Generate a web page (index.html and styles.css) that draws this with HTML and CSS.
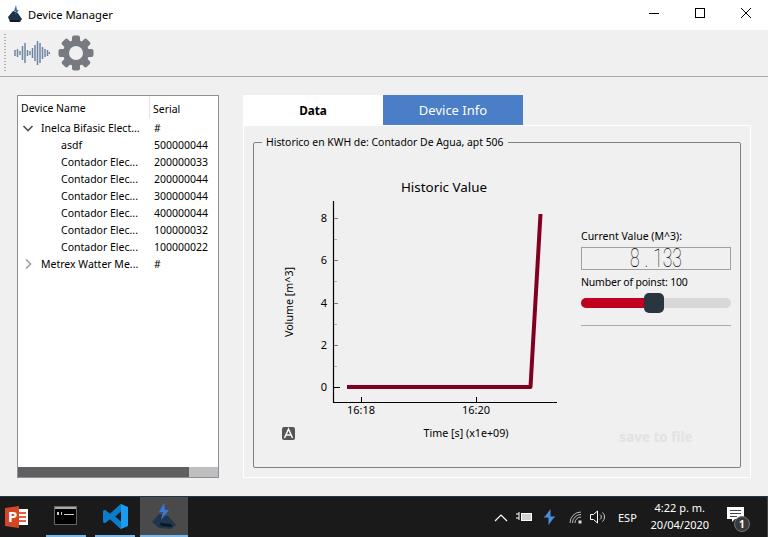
FILE: index.html
```html
<!DOCTYPE html>
<html lang="en">
<head>
<meta charset="utf-8">
<title>Device Manager</title>
<link rel="stylesheet" href="styles.css">
</head>
<body>
<div class="window">
  <header class="titlebar">
    <svg class="app-icon" width="16" height="18" viewBox="0 0 16 18"><path d="M1 12 L6 6 L10 7 L15 14 L13 17 L3 17 Z" fill="#1f3346"/><path d="M4 15 L12 15 L13 17 L3 17 Z" fill="#0f1a24"/><path d="M9 0 L7 6 L9 6 L8 10 L12 5 L10 5 Z" fill="#3f6fb0"/></svg>
    <span class="title-text">Device Manager</span>
    <div class="win-controls">
      <svg width="46" height="30" viewBox="0 0 46 30"><path d="M18 13.500H28" stroke="#000" fill="none"/></svg>
      <svg width="46" height="30" viewBox="0 0 46 30"><rect x="18.500" y="8.500" width="9" height="9" stroke="#000" fill="none"/></svg>
      <svg width="46" height="30" viewBox="0 0 46 30"><path d="M18 8L28 18M28 8L18 18" stroke="#000" fill="none"/></svg>
    </div>
  </header>
  <div class="toolbar">
    <div class="grip"></div>
    <svg class="wave" width="36" height="26" viewBox="0 0 36 26"><path d="M1 10v6M3.500 9v8M6 11v4M8.500 6v14M11 3v20M13.500 10v6M16 11v4M18.500 8v10M21 5v16M23.500 1v24M26 3v20M28.500 7v12M31 9v8M33.500 10v6M35.500 12v2" stroke="#6f84a3" stroke-width="1.500" fill="none"/></svg>
    <svg class="gear" width="36" height="36" viewBox="-18 -18 36 36">
      <g fill="#777b80">
        <circle r="13"/>
        <rect x="-4" y="-17.500" width="8" height="35" rx="2"/>
        <rect x="-4" y="-17.500" width="8" height="35" rx="2" transform="rotate(45)"/>
        <rect x="-4" y="-17.500" width="8" height="35" rx="2" transform="rotate(90)"/>
        <rect x="-4" y="-17.500" width="8" height="35" rx="2" transform="rotate(135)"/>
      </g>
      <circle r="7" fill="#f0f0f0"/>
    </svg>
  </div>
  <main class="main">
    <section class="tree">
      <div class="tree-head">
        <span class="col-name">Device Name</span>
        <span class="col-serial">Serial</span>
      </div>
      <div class="tree-body">
        <div class="row"><svg class="caret" width="12" height="12" viewBox="0 0 12 12"><path d="M1.500 4L6 8.500L10.500 4" stroke="#555" stroke-width="1.700" fill="none"/></svg><span class="name top">Inelca Bifasic Elect...</span><span class="serial">#</span></div>
        <div class="row"><span class="name child">asdf</span><span class="serial">500000044</span></div>
        <div class="row"><span class="name child">Contador Elec...</span><span class="serial">200000033</span></div>
        <div class="row"><span class="name child">Contador Elec...</span><span class="serial">200000044</span></div>
        <div class="row"><span class="name child">Contador Elec...</span><span class="serial">300000044</span></div>
        <div class="row"><span class="name child">Contador Elec...</span><span class="serial">400000044</span></div>
        <div class="row"><span class="name child">Contador Elec...</span><span class="serial">100000032</span></div>
        <div class="row"><span class="name child">Contador Elec...</span><span class="serial">100000022</span></div>
        <div class="row"><svg class="caret" width="12" height="12" viewBox="0 0 12 12"><path d="M4 1.500L8.500 6L4 10.500" stroke="#a0a0a0" stroke-width="1.700" fill="none"/></svg><span class="name top">Metrex Watter Me...</span><span class="serial">#</span></div>
      </div>
      <div class="hscroll"><div class="hscroll-thumb"></div></div>
    </section>
    <section class="tabs-area">
      <nav class="tabs">
        <div class="tab tab-active">Data</div>
        <div class="tab tab-other">Device Info</div>
      </nav>
      <div class="panel">
        <fieldset class="group">
          <legend class="group-title">Historico en KWH de: Contador De Agua, apt 506</legend>
          <div class="group-inner">
            <svg class="plot" width="300" height="310" viewBox="270 150 300 310">
              <text class="plot-title" x="444" y="192" text-anchor="middle">Historic Value</text>
              <path d="M333.500 201V402.500M333 402.500H557" stroke="#000" stroke-width="1.200" fill="none"/>
              <path d="M334 218.500H338M334 260.500H338M334 303.500H338M334 345.500H338" stroke="#777" fill="none"/>
              <path d="M334 239.500H337M334 281.500H337M334 324.500H337M334 366.500H337" stroke="#aaa" fill="none"/>
              <path d="M334 387.500H340M361.500 397V402M476.500 397V402" stroke="#000" fill="none"/>
              <text class="tick" x="327" y="222" text-anchor="end">8</text>
              <text class="tick" x="327" y="264" text-anchor="end">6</text>
              <text class="tick" x="327" y="307" text-anchor="end">4</text>
              <text class="tick" x="327" y="349" text-anchor="end">2</text>
              <text class="tick" x="327" y="391" text-anchor="end">0</text>
              <text class="tick" x="361" y="414" text-anchor="middle">16:18</text>
              <text class="tick" x="476" y="414" text-anchor="middle">16:20</text>
              <text class="axis" x="466" y="437" text-anchor="middle">Time [s] (x1e+09)</text>
              <text class="axis" transform="translate(293 302) rotate(-90)" text-anchor="middle">Volume [m^3]</text>
              <path d="M347 387H530.500L540.500 214" stroke="#800020" stroke-width="4" fill="none" stroke-linejoin="round"/>
              <rect x="282" y="427" width="13" height="13" rx="2" fill="#555"/>
              <path d="M284.500 438L288.500 429L292.500 438M286 435H291" stroke="#fff" stroke-width="1.500" fill="none"/>
            </svg>
            <div class="side">
              <div class="label">Current Value (M^3):</div>
              <div class="lcd"><span class="lcd-text">8 . 133</span></div>
              <div class="label points">Number of poinst: 100</div>
              <div class="slider">
                <div class="slider-fill"></div>
                <div class="slider-handle"></div>
              </div>
              <hr class="rule">
              <div class="save">save to file</div>
            </div>
          </div>
        </fieldset>
      </div>
    </section>
  </main>
  <footer class="taskbar">
    <div class="task-item task-ppt">
      <svg width="24" height="24" viewBox="0 0 24 24"><rect x="9" y="4" width="14" height="16" fill="#fff"/><path d="M14 7h7v2h-7zM14 11h7v2h-7zM14 15h7v2h-7z" fill="#e0633f"/><path d="M0 3L14 1V23L0 21Z" fill="#d24726"/><text class="ppt-p" x="3" y="17">P</text></svg>
    </div>
    <div class="task-item task-open">
      <svg width="24" height="20" viewBox="0 0 24 20"><rect x=".5" y=".5" width="22" height="18" fill="#000" stroke="#666"/><rect x="1" y="1" width="21" height="2" fill="#aaa"/><path d="M3 6h2v3H3zM7 6h1v3H7zM10 8h10v1H10z" fill="#ccc"/></svg>
    </div>
    <div class="task-item task-open">
      <svg width="25" height="25" viewBox="0 0 25 25"><path d="M18 0L25 3V22L18 25L7 15L2 19L0 18V7L2 6L7 10Z M18 7L12 12.500L18 18Z" fill="#1c9cf0" fill-rule="evenodd"/><path d="M18 0L7 10L2 6L0 7V18L2 19L7 15L18 25V18L12 12.500L18 7Z" fill="#0a7ccc" fill-rule="evenodd"/></svg>
    </div>
    <div class="task-item task-active">
      <svg width="26" height="26" viewBox="0 0 26 26"><path d="M1 19L8 11L17 13L25 22L20 26L8 25Z" fill="#1f3650"/><path d="M9 20L20 21L21 24L10 23Z" fill="#0d1720"/><path d="M13 0L8 9H12L10 17L18 7H14Z" fill="#3a78d8"/></svg>
    </div>
    <div class="tray">
      <svg class="tray-chevron" width="14" height="9" viewBox="0 0 14 9"><path d="M1 8L7 2L13 8" stroke="#fff" stroke-width="1.200" fill="none"/></svg>
      <svg class="tray-battery" width="17" height="12" viewBox="0 0 17 12"><path d="M0 3H3M0 7H3M3 1V9" stroke="#fff" fill="none"/><rect x="5.500" y="2.500" width="10" height="7" stroke="#fff" fill="#fff" fill-opacity=".8"/></svg>
      <svg class="tray-bolt" width="11" height="16" viewBox="0 0 11 16"><path d="M6.500 0L1 7.500H6.500ZM4.500 8.500H10L4.500 16ZM0 7.500H11V8.500H0Z" fill="#4a90e2"/></svg>
      <svg class="tray-wifi" width="13" height="13" viewBox="0 0 13 13"><path d="M1 12A11 11 0 0 1 12 1M3.500 12A8.500 8.500 0 0 1 12 3.500M6 12A6 6 0 0 1 12 6" stroke="#bbb" fill="none"/><rect x="9.500" y="9.500" width="3" height="3" fill="#ddd"/></svg>
      <svg class="tray-vol" width="16" height="14" viewBox="0 0 16 14"><path d="M.5 4.500H3.500L7.500 1V13L3.500 9.500H.5Z" stroke="#fff" fill="none"/><path d="M10 4.500A3 3 0 0 1 10 9.500M12.500 2.500A6 6 0 0 1 12.500 11.500" stroke="#ccc" fill="none"/></svg>
      <span class="tray-lang">ESP</span>
      <div class="clock"><div>4:22 p. m.</div><div>20/04/2020</div></div>
      <div class="notif">
        <svg width="17" height="15" viewBox="0 0 17 15"><path d="M0 0H17V12H8L5 15V12H0Z" fill="#fff"/><path d="M3 3.500H14M3 6.500H14M3 9.500H10" stroke="#444"/></svg>
        <span class="notif-badge">1</span>
      </div>
    </div>
  </footer>
</div>
</body>
</html>
```

FILE: styles.css
```css
* { box-sizing: border-box; }
html, body { margin: 0; padding: 0; }
body {
  width: 768px;
  height: 537px;
  overflow: hidden;
  font-family: "Noto Sans", "Open Sans", sans-serif;
  font-size: 10.500px;
  color: #000;
  background: #f0f0f0;
}
.window { display: flex; flex-direction: column; height: 537px; }

.titlebar { height: 30px; flex: none; background: #fff; display: flex; align-items: center; padding-left: 7px; }
.app-icon { margin-top: -2px; }
.title-text { margin-left: 5px; margin-top: -2px; font-size: 11.200px; }
.win-controls { margin-left: auto; margin-right: -1px; display: flex; }
.win-controls svg { display: block; }

.toolbar { height: 47px; flex: none; display: flex; align-items: center; border-bottom: 1px solid #a8a8a8; padding-left: 4px; }
.grip { width: 2px; height: 38px; margin-right: 8px; background: repeating-linear-gradient(#b0b0b0 0 1px, transparent 1px 3px); }
.wave { margin-right: 8px; }

.main { flex: 1; display: flex; gap: 24px; padding: 18px 0 0 17px; min-height: 0; }

.tree { width: 202px; height: 383px; background: #fff; border: 1px solid #8f8f9b; display: flex; flex-direction: column; }
.tree-head { height: 23px; flex: none; display: flex; align-items: center; }
.col-name { width: 132px; height: 23px; line-height: 22px; padding: 1px 0 0 3px; border-right: 1px solid #e2e2e2; }
.col-serial { padding: 2px 0 0 3px; }
.tree-body { flex: 1; }
.row { height: 17px; display: flex; align-items: center; position: relative; }
.caret { position: absolute; left: 4px; top: 3px; }
.name { width: 136px; white-space: nowrap; overflow: hidden; }
.name.top { padding-left: 23px; }
.name.child { padding-left: 43px; }
.serial { white-space: nowrap; }
.hscroll { height: 10px; flex: none; background: #bfbfbf; }
.hscroll-thumb { width: 171px; height: 100%; background: #5f5f5f; }

.tabs-area { width: 508px; display: flex; flex-direction: column; }
.tabs { display: flex; height: 30px; flex: none; }
.tab { width: 140px; display: flex; align-items: center; justify-content: center; }
.tab-active { background: #fff; font-weight: 700; font-size: 11.700px; }
.tab-other { background: #4a7ec7; color: #fff; font-size: 13px; }

.panel { height: 353px; border: 1px solid #fff; padding: 9px 9px 9px 9px; }
.group { margin: 0; min-width: 0; height: 333px; padding: 0; border: 1px solid #808080; border-radius: 2px; }
.group-title { margin-left: 8px; padding: 0 4px; font-size: 10.400px; line-height: 15px; }
.group-inner { display: flex; padding: 0 9px 0 16px; height: 317px; }
.plot { display: block; flex: none; }
.plot-title { font-size: 13.400px; }
.tick { font-size: 11px; }
.axis { font-size: 10.700px; }

.side { width: 150px; margin-left: 11px; display: flex; flex-direction: column; padding-top: 79px; padding-bottom: 21px; }
.label { line-height: 15px; }
.lcd { height: 23px; margin-top: 3px; border: 1px solid #a0a0a0; display: flex; align-items: center; justify-content: center; }
.lcd-text { display: block; font-family: "Roboto", sans-serif; font-weight: 100; font-size: 25px; line-height: 21px; white-space: pre; transform: scaleX(.7); color: #000; word-spacing: 1px; }
.points { margin-top: 5px; letter-spacing: -.2px; }
.slider { position: relative; height: 10px; margin-top: 8px; border-radius: 5px; background: #d8d8d8; }
.slider-fill { width: 66px; height: 100%; border-radius: 5px 0 0 5px; background: #c0001e; }
.slider-handle { position: absolute; left: 63px; top: -5px; width: 20px; height: 20px; border-radius: 5px; background: #2b3540; }
.rule { width: 100%; margin: 17px 0 0; border: 0; border-top: 1px solid #a8a8a8; }
.save { margin-top: auto; text-align: center; font-weight: 700; font-size: 13.500px; color: #e2e2e2; }

.taskbar { height: 41px; flex: none; background: #1a1a1a; border-top: 1px solid #1c3a4c; display: flex; align-items: center; color: #fff; }
.task-item { height: 40px; display: flex; align-items: center; justify-content: center; }
.task-item svg { display: block; }
.task-ppt { width: 46px; padding-right: 12px; }
.task-open { width: 40px; margin-right: 9px; border-bottom: 2px solid #76b9ed; }
.task-active { width: 48px; margin-left: -4px; background: #4a4a4a; border-bottom: 2px solid #76b9ed; }
.ppt-p { font-size: 15px; font-weight: 700; fill: #fff; }
.tray { margin-left: auto; width: 274px; height: 40px; display: flex; align-items: center; font-size: 11px; position: relative; padding-right: 5px; border-right: 1px solid #444; }
.tray-chevron { margin-left: 0; }
.tray-battery { margin-left: 8px; }
.tray-bolt { margin-left: 11px; }
.tray-wifi { margin-left: 14px; }
.tray-vol { margin-left: 8px; }
.tray-lang { margin-left: 12px; font-size: 11px; }
.clock { margin-left: 12px; margin-top: -2px; width: 62px; text-align: center; font-size: 11px; line-height: 17px; }
.notif { margin-left: 16px; position: relative; width: 24px; height: 30px; padding-top: 5px; }
.notif svg { display: block; }
.notif-badge { position: absolute; left: 7px; top: 14px; width: 16px; height: 16px; border-radius: 50%; background: #3a3a3a; border: 1px solid #777; font-size: 10px; line-height: 14px; text-align: center; font-weight: 700; }
```
